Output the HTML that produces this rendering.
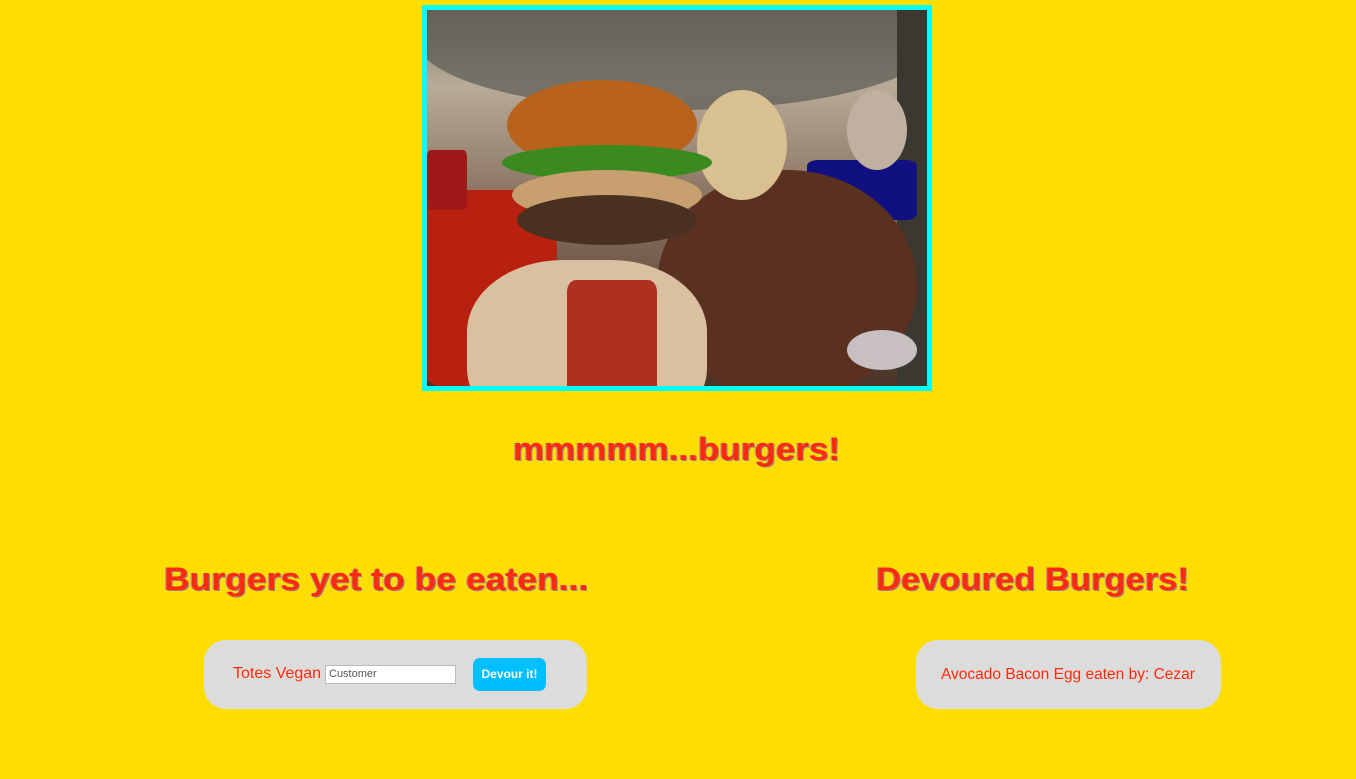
<!DOCTYPE html>
<html><head><style>
body{margin:0;width:1356px;height:779px;background:#fedd00;position:relative;overflow:hidden;font-family:"Liberation Sans",sans-serif}
.img{position:absolute;left:422px;top:5px;width:500px;height:376px;border:5px solid #00ffff;overflow:hidden;background:linear-gradient(180deg,#7a7466 0%,#b8ab98 20%,#8a7360 50%,#4a3428 100%)}
.b{position:absolute;border-radius:50%}
.h{position:absolute;color:#ff2a0a;font-weight:bold;text-shadow:1px 1px 0 #a08080,-1px 0 0 #c09090;white-space:nowrap;transform-origin:left top}
.box{position:absolute;background:#dcdcdc;border-radius:22px;height:69px;top:640px}
.t{position:absolute;color:#ff2a0a;font-size:16px}
</style></head><body>
<div class="img">
 <div class="b" style="left:-10px;top:-40px;width:520px;height:140px;background:#5a5a52;border-radius:0 0 50% 50%;opacity:.7"></div>
 <div class="b" style="left:-20px;top:180px;width:150px;height:200px;background:#b82010;border-radius:30%"></div>
 <div class="b" style="left:0px;top:140px;width:40px;height:60px;background:#a01818;border-radius:10%"></div>
 <div class="b" style="left:470px;top:0;width:40px;height:380px;background:#3a3830;border-radius:0"></div>
 <div class="b" style="left:380px;top:150px;width:110px;height:60px;background:#101080;border-radius:10%"></div>
 <div class="b" style="left:230px;top:160px;width:260px;height:230px;background:#5a3020"></div>
 <div class="b" style="left:270px;top:80px;width:90px;height:110px;background:#d8c090"></div>
 <div class="b" style="left:40px;top:250px;width:240px;height:180px;background:#d8c0a0;border-radius:40%"></div>
 <div class="b" style="left:140px;top:270px;width:90px;height:120px;background:#b03020;border-radius:10%"></div>
 <div class="b" style="left:80px;top:70px;width:190px;height:90px;background:#b8621c"></div>
 <div class="b" style="left:75px;top:135px;width:210px;height:35px;background:#3a8a20"></div>
 <div class="b" style="left:85px;top:160px;width:190px;height:50px;background:#c8a070"></div>
 <div class="b" style="left:90px;top:185px;width:180px;height:50px;background:#4a3020"></div>
 <div class="b" style="left:420px;top:80px;width:60px;height:80px;background:#c0b0a0"></div>
 <div class="b" style="left:420px;top:320px;width:70px;height:40px;background:#c8c0c0"></div>
</div>
<div class="h" style="left:513px;top:431px;font-size:32px;transform:scaleX(1.095)">mmmmm...burgers!</div>
<div class="h" style="left:164px;top:561px;font-size:32px;transform:scaleX(1.11)">Burgers yet to be eaten...</div>
<div class="h" style="left:876px;top:561px;font-size:32px;transform:scaleX(1.08)">Devoured Burgers!</div>
<div class="box" style="left:204px;width:383px"></div>
<div class="t" style="left:233px;top:665px">Totes Vegan</div>
<div style="position:absolute;left:325px;top:665px;background:#fff;border:1px solid #bbb;font-size:11px;color:#555;line-height:17px;padding-left:3px;box-sizing:border-box;width:131px;height:19px">Customer</div>
<div style="position:absolute;left:473px;top:658px;width:73px;height:33px;background:#00bfff;border-radius:7px;color:#fff;font-size:12px;font-weight:bold;text-align:center;line-height:33px">Devour it!</div>
<div class="box" style="left:916px;width:305px"></div>
<div class="t" style="left:941px;top:666px;font-size:15.5px">Avocado Bacon Egg eaten by: Cezar</div>
</body></html>
